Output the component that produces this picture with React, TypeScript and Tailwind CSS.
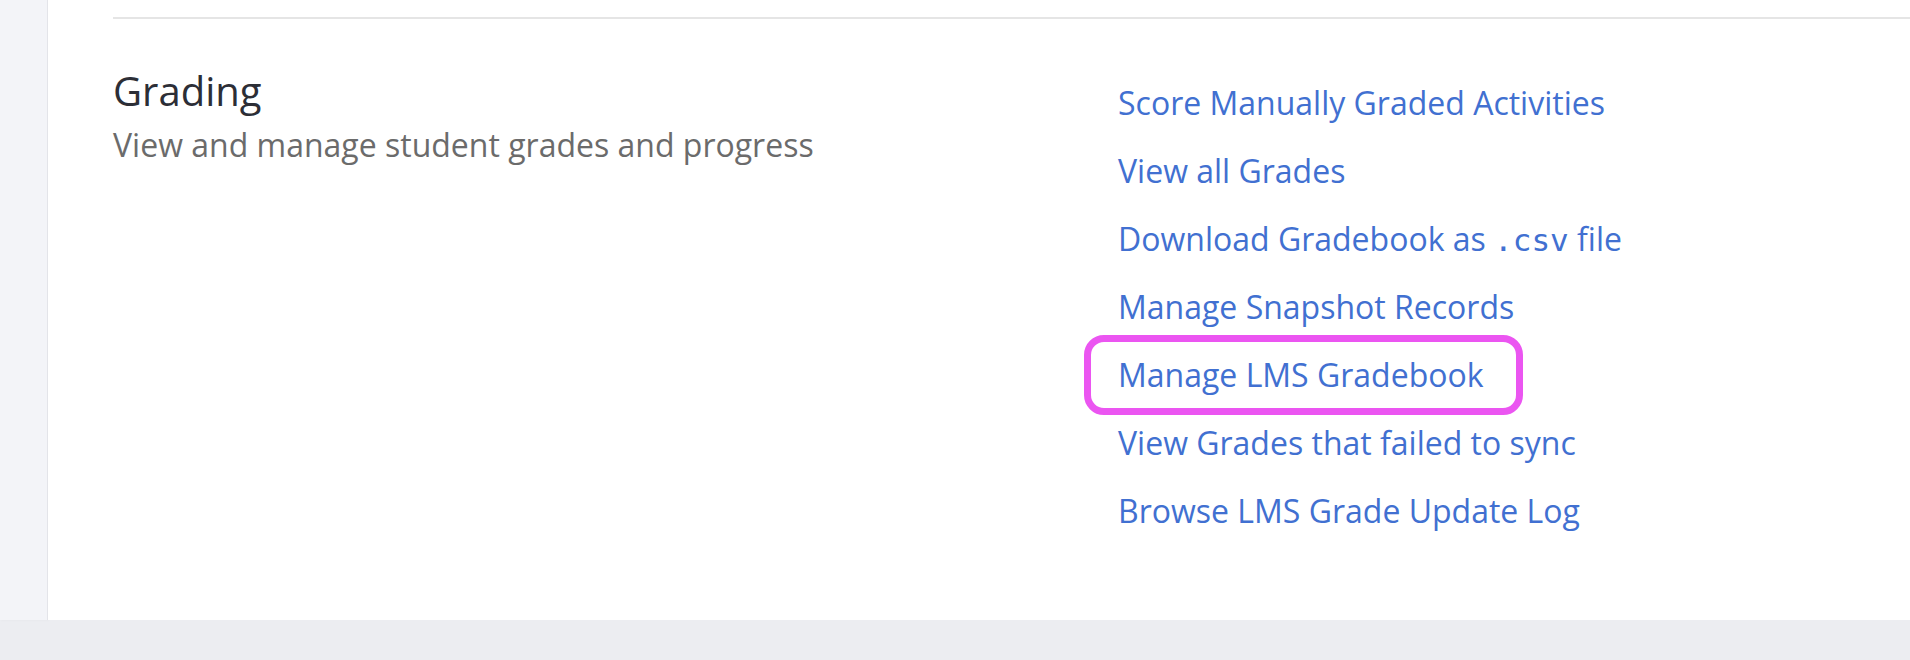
const links = [
  'Score Manually Graded Activities',
  'View all Grades',
  'csv',
  'Manage Snapshot Records',
  'Manage LMS Gradebook',
  'View Grades that failed to sync',
  'Browse LMS Grade Update Log',
];

export default function App() {
  return (
    <div className="h-[660px] flex flex-col bg-[#ecedf1] font-['Open_Sans',sans-serif] overflow-hidden">
      <div className="h-[620px] flex">
        <div className="w-[48px] bg-[#f3f4f8] border-r border-[#e3e4e9] shadow-[1px_0_3px_rgba(0,0,0,0.04)]" />
        <div className="flex-1 bg-white pl-[65px]">
          <div className="h-[2px] bg-[#e5e5e5] mt-[17px]" />
          <div className="flex pt-[46px]">
            <div className="w-[1005px] pt-[2px]">
              <h2 className="text-[40px] leading-[48px] text-[#2c2e36]">Grading</h2>
              <p className="text-[32px] leading-[40px] text-[#6b6b6b] mt-[10px]">
                View and manage student grades and progress
              </p>
            </div>
            <ul className="flex flex-col mt-[4px]">
              {links.map((l) => (
                <li key={l} className="h-[68px] flex items-center">
                  {l === 'Manage LMS Gradebook' ? (
                    <span className="-ml-[34px] pl-[27px] pr-[32px] h-[80px] flex items-center rounded-[20px] border-[7px] border-[#eb55f1]">
                      <a className="text-[32px] text-[#4170d1]">{l}</a>
                    </span>
                  ) : l === 'csv' ? (
                    <a className="text-[32px] text-[#4170d1]">
                      Download Gradebook as{' '}
                      <code className="font-['DejaVu_Sans_Mono',monospace] text-[31px]">.csv</code> file
                    </a>
                  ) : (
                    <a className="text-[32px] text-[#4170d1]">{l}</a>
                  )}
                </li>
              ))}
            </ul>
          </div>
        </div>
      </div>
    </div>
  );
}
